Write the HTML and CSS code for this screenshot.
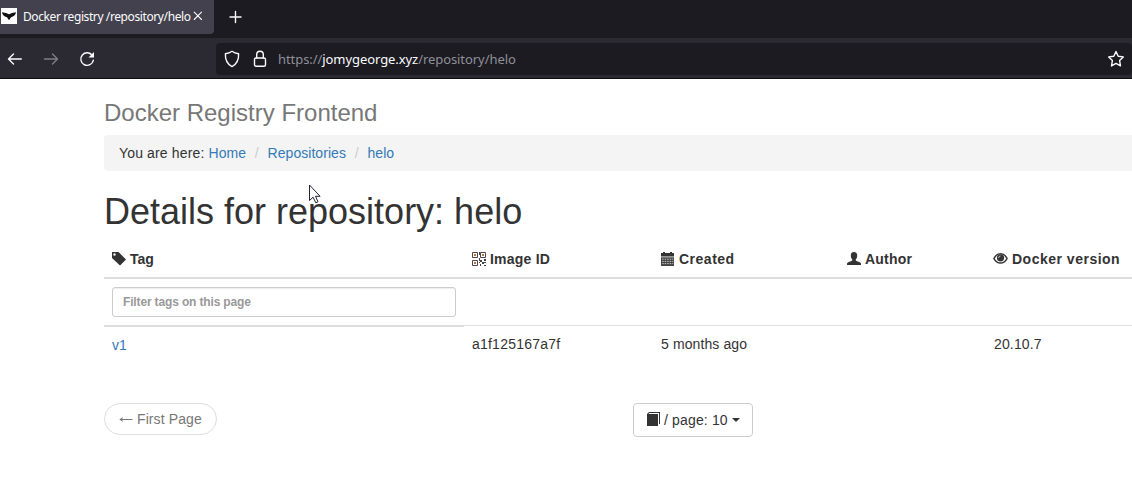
FILE: index.html
```html
<!DOCTYPE html>
<html lang="en">
<head>
<meta charset="utf-8">
<title>Docker registry /repository/helo</title>
<link rel="stylesheet" href="styles.css">
</head>
<body>
<header class="browser">
  <div class="tabs">
    <div class="tab">
      <svg class="favicon" width="16" height="16" viewBox="0 0 16 16"><path fill="#fff" d="M0 0h16v16H0z"/><path fill="#111" d="M1 4.300 5 5l3 1.200L11 5l4-.7c-.3 2.700-2.100 4.500-5 4.900L8 12.300 6 9.200C3.100 8.800 1.300 7 1 4.300z"/></svg>
      <span class="tab-title">Docker registry /repository/helo</span>
      <svg class="close" width="10" height="10" viewBox="0 0 10 10"><path class="line" d="M1.200 1.200l7.300 7.300M8.500 1.200 1.200 8.500"/></svg>
    </div>
    <svg class="plus" width="14" height="14" viewBox="0 0 14 14"><path class="line thick" d="M6.500 1.500v11M1 7h11"/></svg>
  </div>
  <div class="toolbar">
    <div class="nav">
      <svg width="16" height="16" viewBox="0 0 16 16"><path class="line thick" d="M14.300 8H1.500M6.500 3 1.500 8l5 5"/></svg>
      <svg class="dim" width="16" height="16" viewBox="0 0 16 16"><path class="line thick" d="M1.500 8h12.800M9.500 3l5 5-5 5"/></svg>
      <svg width="16" height="16" viewBox="0 0 16 16"><path class="line thick" d="M13.300 4.500A6.300 6.300 0 1 0 14.300 9.300"/><path fill="#fbfbfe" d="M15 1v5.500H9.500z"/></svg>
    </div>
    <div class="url">
      <svg class="shield" width="16" height="18" viewBox="0 0 16 18"><path class="line thick" d="M8 1.200c2 1.500 4.200 2.200 6.600 2.600.3 5.700-1.600 10.200-6.600 12.800C3 14 1.100 9.500 1.400 3.800 3.800 3.400 6 2.700 8 1.200z"/></svg>
      <svg class="lock" width="14" height="18" viewBox="0 0 14 18"><rect class="line thick" x="1.500" y="8" width="11" height="8.300" rx="1.500"/><path class="line thick" d="M3.700 8V4.600a3.300 3.300 0 0 1 6.600 0V8"/></svg>
      <span class="address">https://<b>jomygeorge.xyz</b>/repository/helo</span>
      <svg class="star" width="18" height="18" viewBox="0 0 18 18"><path class="line thick" d="m9 1.500 2.200 4.700 5.100.7-3.700 3.600.9 5.400L9 13.400l-4.500 2.500.9-5.400-3.700-3.600 5.100-.7z"/></svg>
    </div>
  </div>
</header>
<main class="page">
  <h3 class="brand">Docker Registry Frontend</h3>
  <nav class="crumbs"><span>You are here: </span><a>Home</a><i>/</i><a>Repositories</a><i>/</i><a>helo</a></nav>
  <h1 class="title">Details for repository: helo</h1>
  <svg class="cursor" width="14" height="21" viewBox="0 0 14 21"><path fill="#fff" stroke="#223" d="M1.500 1v15.500l3.600-3.300 2.700 5.600 2.200-1-2.500-5.500h4.600z"/></svg>
  <div class="table">
    <div class="row head">
      <div><svg class="icon" width="14" height="14" viewBox="0 0 14 14"><path fill="#333" fill-rule="evenodd" d="M0 0h6.500L14 7.500 8 13.500 0 6zM2.500 1.300a1.200 1.200 0 1 0 0 2.400 1.200 1.200 0 0 0 0-2.400z"/></svg>Tag</div>
      <div class="wide"><svg class="icon" width="14" height="14" viewBox="0 0 14 14"><path fill="none" stroke="#5a4444" d="M.5.500h5v5h-5zM8.500.500h5v5h-5zM.5 8.500h5v5h-5z"/><path fill="#b07848" d="M2 2h2v2H2zM10 2h2v2h-2zM2 10h2v2H2z"/><path fill="#444" d="M7 0h1v3H7zM7 6h1v3H7zM8 8h2v2H8zM12 7h2v2h-2zM7 10h1v1H7zM8 12h1v2H8zM10 10h4v1h-4zM10 11h2v1h-2zM12 13h2v1h-2z"/></svg>Image ID</div>
      <div class="wider"><svg class="icon" width="14" height="14" viewBox="0 0 14 14"><path fill="#333" d="M1 1h1V0h2v1h5V0h2v1h2v3.500H0V1z"/><path fill="#444" d="M0 5.300h13V14H0z"/><path stroke="#fff" stroke-width=".7" stroke-dasharray="1.500 1" d="M1.200 7.200h11M1.200 9.400h11M1.200 11.600h11"/></svg>Created</div>
      <div class="wide"><svg class="icon" width="14" height="14" viewBox="0 0 14 14"><path fill="#333" d="M7 0c2.300 0 3.300 1.600 3.200 3.700 0 1.600-.6 2.700-1.400 3.600v1.300c.7.900 4.700 1.400 5.200 3v1.400H0v-1.400c.5-1.600 4.500-2.100 5.200-3V7.300C4.400 6.400 3.800 5.300 3.800 3.700 3.700 1.600 4.700 0 7 0z"/></svg>Author</div>
      <div class="wider"><svg class="icon" width="15" height="14" viewBox="0 0 15 14"><path fill="#fff" stroke="#333" stroke-width="1.500" d="M.9 6.500C4 .2 11 .2 14.100 6.500 11 12.600 4 12.600.9 6.500z"/><circle cx="7.500" cy="5.800" r="3.600" fill="#333"/><path fill="none" stroke="#fff" stroke-width=".8" d="M5.600 6c0-1.200.8-2 1.900-2"/></svg>Docker version</div>
    </div>
    <div class="row filter">
      <div><input class="search" type="text" placeholder="Filter tags on this page"></div><div></div><div></div><div></div><div></div>
    </div>
    <div class="row data"><div class="tag"><a>v1</a></div><div class="hash">a1f125167a7f</div><div class="age">5 months ago</div><div></div><div class="version">20.10.7</div></div>
  </div>
  <div class="footer">
    <span class="pill"><svg width="14" height="10" viewBox="0 0 14 10"><path fill="none" stroke="#777" d="M13.500 5.500H1"/><path fill="#777" d="M4 3 .3 5.500 4 8 3 5.500z"/></svg>First Page</span>
    <button class="size"><svg width="14" height="14" viewBox="0 0 14 14"><path fill="#333" d="M3 0h11v12h-1V1H3.300l-.8 1H12v12H1V2z"/></svg><span>/ page: 10</span><i class="caret"></i></button>
  </div>
</main>
</body>
</html>
```
FILE: styles.css
```css
* { box-sizing: border-box; }
body { margin: 0; width: 1132px; height: 500px; overflow: hidden; background: #fff; color: #333; font: 14px/20px "Liberation Sans", Arial, sans-serif; }
svg { display: block; flex: none; }
a { color: #337ab7; }
.line { fill: none; stroke: #fbfbfe; stroke-width: 1.1; stroke-linecap: round; stroke-linejoin: round; }
.thick { stroke-width: 1.4; }
.browser { height: 79px; background: #2b2a33; border-bottom: 1px solid #0c0c0d; font-family: "Noto Sans", sans-serif; }
.tabs { height: 38px; background: #1c1b22; display: flex; }
.tab { width: 214px; height: 34px; background: #42414d; border-radius: 0 0 4px 0; display: flex; align-items: center; padding: 0 0 2px 1px; color: #fbfbfe; }
.tab-title { width: 168px; margin: 1px 0 0 6px; font-size: 12px; letter-spacing: -.4px; white-space: nowrap; }
.close { margin-left: 2px; }
.plus { margin: 10px 0 0 15px; }
.toolbar { height: 40px; display: flex; align-items: center; padding-top: 1px; }
.nav { width: 216px; display: flex; gap: 20px; padding-left: 7px; }
.dim { opacity: .4; }
.url { flex: 1; height: 32px; background: #1c1b22; border-radius: 4px; display: flex; align-items: center; padding: 0 7px 0 8px; }
.lock { margin-left: 13px; }
.address { margin: 1px 0 0 11px; color: #8f8f98; font-size: 13px; letter-spacing: -.07px; white-space: nowrap; }
.address b { color: #fbfbfe; font-weight: 400; }
.star { margin-left: auto; }
.page { position: relative; padding-left: 104px; }
.brand { margin: 0; padding-top: 20px; height: 56px; color: #777; font-size: 24px; line-height: 28px; font-weight: 400; }
.crumbs { height: 36px; background: #f4f4f4; border-radius: 4px 0 0 4px; padding: 8px 15px; display: flex; }
.crumbs span { width: 89.5px; letter-spacing: .15px; }
.crumbs i { width: 21.5px; text-align: center; color: #ccc; font-style: normal; }
.crumbs a { letter-spacing: .05px; }
.title { margin: 21px 0 8px; font-size: 36px; line-height: 40px; font-weight: 400; }
.cursor { position: absolute; left: 308px; top: 105px; }
.row { display: grid; grid-template-columns: 360px 189px 186px 146px 1fr; }
.head { height: 39px; border-bottom: 2px solid #ddd; font-weight: 700; }
.head > div { display: flex; padding: 9px 0 0 8px; white-space: nowrap; }
.head .wide { letter-spacing: .22px; }
.head .wider { letter-spacing: .5px; }
.icon { margin: 3px 4px 0 0; }
.filter { height: 48px; }
.filter > div { height: 47px; border-bottom: 1px solid #ddd; }
.filter > div:first-child { height: 48px; border-bottom-width: 2px; padding: 8px 8px 0; }
.search { display: block; width: 344px; height: 30px; border: 1px solid #ccc; border-radius: 3px; padding: 5px 10px; font: 700 12px/18px "Liberation Sans", Arial, sans-serif; letter-spacing: -.15px; box-shadow: inset 0 1px 1px rgba(0, 0, 0, .075); }
.search::placeholder { color: #999; opacity: 1; }
.data { height: 76px; }
.data > div { padding: 7px 8px; }
.data .tag { padding-top: 8px; }
.data .hash { letter-spacing: .22px; }
.data .age { letter-spacing: .1px; }
.data .version { padding-left: 9px; letter-spacing: .15px; }
.footer { display: flex; align-items: flex-start; }
.pill { width: 113px; height: 32px; border: 1px solid #ddd; border-radius: 16px; display: flex; align-items: center; gap: 4px; padding-left: 14px; color: #777; letter-spacing: .1px; white-space: nowrap; }
.size { margin-left: 416px; width: 120px; height: 34px; border: 1px solid #ccc; border-radius: 4px; background: #fff; color: #333; display: flex; align-items: center; padding: 0 0 0 12px; font: 14px/20px "Liberation Sans", Arial, sans-serif; white-space: nowrap; }
.size svg { margin-top: -2px; }
.size span { margin-left: 4px; letter-spacing: .15px; }
.caret { margin-left: 4px; border: 4px solid transparent; border-top-color: #333; border-bottom: 0; }
```
